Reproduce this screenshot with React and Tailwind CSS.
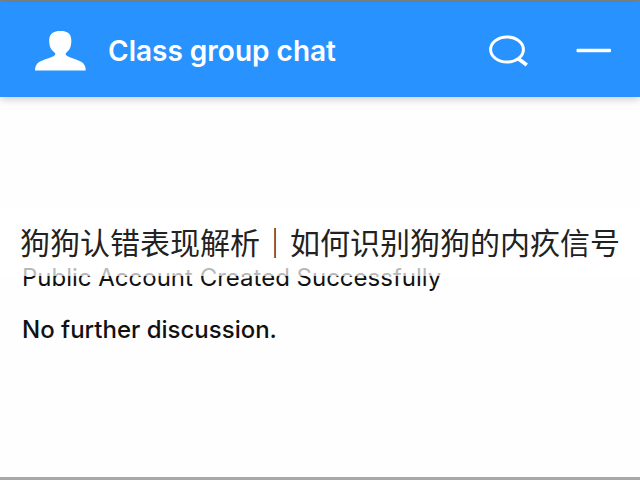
import React from 'react';

const PersonIcon = () => (
  <svg className="w-[52px] h-10" viewBox="0 0 52 40" fill="currentColor" aria-hidden="true">
    <path d="M26.500 0C19.500 0 15.500 2.500 15.200 9C15 14.500 16.500 18.500 20.500 21.500C22 23 21.500 24 19.500 25.200C15 27.300 9 28.500 5 31C2 33 1 36 1 39.500H51.700C51.700 36 50.700 33 47.700 31C43.700 28.500 38 27.300 33.500 25.200C31.500 24 31 23 32.500 21.500C36.200 18.500 37.500 14.500 37.300 9C37 2.500 33.500 0 26.500 0Z" />
  </svg>
);

const SearchIcon = () => (
  <svg className="w-10 h-8" viewBox="0 0 40 32" fill="none" stroke="currentColor" aria-hidden="true">
    <ellipse cx="19" cy="14.500" rx="16.400" ry="12.600" strokeWidth="3" />
    <path d="M30 23.500L38.800 30" strokeWidth="3.800" />
  </svg>
);

const MinusIcon = () => (
  <svg className="w-9 h-4" viewBox="0 0 36 16" aria-hidden="true">
    <rect x="0.500" y="5.800" width="34.500" height="3.400" rx="1" fill="currentColor" />
  </svg>
);

const ChatHeader = () => (
  <header className="relative flex items-center h-[95px] pl-[34px] pr-7 pt-0.5 bg-[#2892fe] text-white shadow-[0_2px_8px_rgba(0,0,0,0.22)]">
    <PersonIcon />
    <h1 className="ml-[22px] font-['Inter'] text-[28px] leading-8 font-semibold whitespace-nowrap">Class group chat</h1>
    <div className="flex items-center gap-12 ml-auto">
      <button type="button" aria-label="Search">
        <SearchIcon />
      </button>
      <button type="button" aria-label="Minimize">
        <MinusIcon />
      </button>
    </div>
  </header>
);

const App = () => (
  <div className="flex flex-col min-h-screen bg-[#fefefe] border-t-2 border-t-[#7d8488] border-b-3 border-b-[#a8a8a8] font-['Inter',sans-serif]">
    <ChatHeader />
    <main className="flex-1 pt-28 text-[#111111]">
      {/* Translucent caption band, covers the top half of the first message */}
      <h2 className="relative z-10 h-[67px] px-5 pt-2.5 bg-white/70 font-['Noto_Sans_CJK_SC',sans-serif] font-normal text-[30px] leading-[44px] text-[#222222] whitespace-nowrap">
        狗狗认错表现解析<span className="font-medium">｜</span>如何识别狗狗的内疚信号
      </h2>
      <div className="flex flex-col gap-6 -mt-3 px-[22px] text-[24px] leading-7">
        <p>Public Account Created Successfully</p>
        <p className="font-medium">No further discussion.</p>
      </div>
    </main>
  </div>
);

export default App;
